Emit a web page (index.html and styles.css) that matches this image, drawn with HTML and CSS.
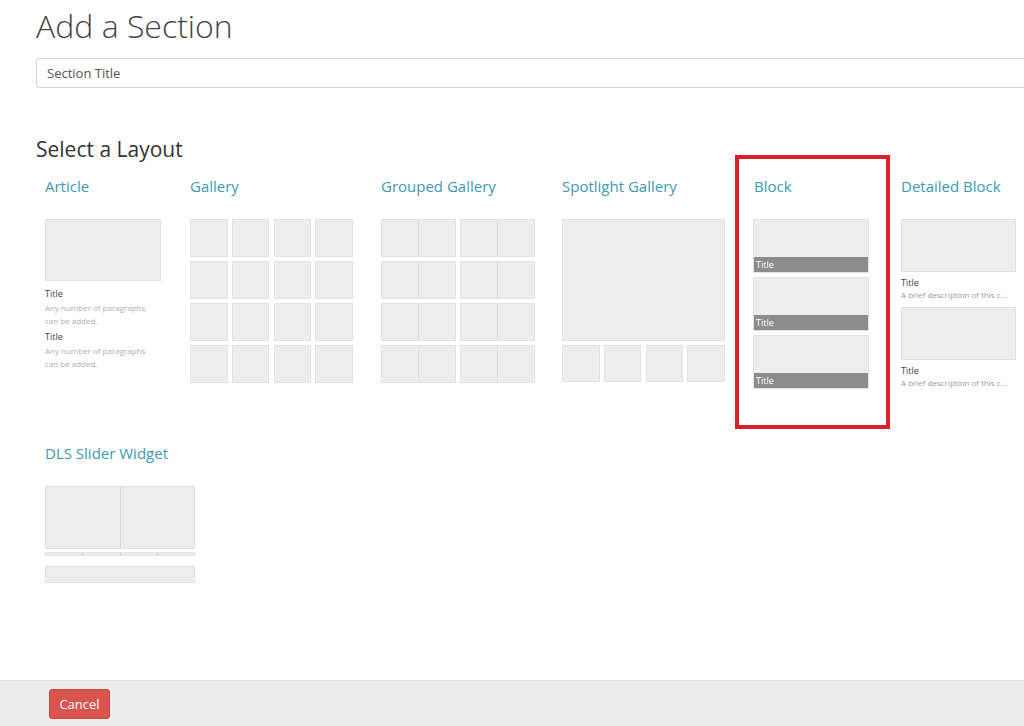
FILE: index.html
```html
<!DOCTYPE html>
<html>
<head>
<meta charset="utf-8">
<link rel="stylesheet" href="styles.css">
</head>
<body>
<div class="page">
  <main class="main">
    <h1 class="page-title">Add a Section</h1>
    <input class="title-input" type="text" placeholder="Section Title">
    <h2 class="select-title">Select a Layout</h2>

    <div class="layouts">
      <div class="option col-article">
        <div class="option-name">Article</div>
        <div class="thumb art-img"></div>
        <div class="art-title">Title</div>
        <div class="art-desc">Any number of paragraphs can be added.</div>
        <div class="art-title art-title2">Title</div>
        <div class="art-desc">Any number of paragraphs can be added.</div>
      </div>

      <div class="option col-gallery">
        <div class="option-name">Gallery</div>
        <div class="gallery">
          <div class="thumb"></div><div class="thumb"></div><div class="thumb"></div><div class="thumb"></div>
          <div class="thumb"></div><div class="thumb"></div><div class="thumb"></div><div class="thumb"></div>
          <div class="thumb"></div><div class="thumb"></div><div class="thumb"></div><div class="thumb"></div>
          <div class="thumb"></div><div class="thumb"></div><div class="thumb"></div><div class="thumb"></div>
        </div>
      </div>

      <div class="option col-grouped">
        <div class="option-name">Grouped Gallery</div>
        <div class="grouped">
          <div class="group"><div class="gcell"></div><div class="gcell"></div></div>
          <div class="group"><div class="gcell"></div><div class="gcell"></div></div>
          <div class="group"><div class="gcell"></div><div class="gcell"></div></div>
          <div class="group"><div class="gcell"></div><div class="gcell"></div></div>
          <div class="group"><div class="gcell"></div><div class="gcell"></div></div>
          <div class="group"><div class="gcell"></div><div class="gcell"></div></div>
          <div class="group"><div class="gcell"></div><div class="gcell"></div></div>
          <div class="group"><div class="gcell"></div><div class="gcell"></div></div>
        </div>
      </div>

      <div class="option col-spotlight">
        <div class="option-name">Spotlight Gallery</div>
        <div class="thumb spot-main"></div>
        <div class="spot-row">
          <div class="thumb"></div><div class="thumb"></div><div class="thumb"></div><div class="thumb"></div>
        </div>
      </div>

      <div class="option col-block highlighted">
        <div class="option-name">Block</div>
        <div class="blocks">
          <div class="block-card"><div class="block-img"></div><div class="block-bar">Title</div></div>
          <div class="block-card"><div class="block-img"></div><div class="block-bar">Title</div></div>
          <div class="block-card"><div class="block-img"></div><div class="block-bar">Title</div></div>
        </div>
      </div>

      <div class="option col-detailed">
        <div class="option-name">Detailed Block</div>
        <div class="thumb det-img"></div>
        <div class="det-title">Title</div>
        <div class="det-desc">A brief description of this c...</div>
        <div class="thumb det-img det-img2"></div>
        <div class="det-title">Title</div>
        <div class="det-desc">A brief description of this c...</div>
      </div>
    </div>

    <div class="layouts row2">
      <div class="option col-slider">
        <div class="option-name">DLS Slider Widget</div>
        <div class="slider-main">
          <div class="slider-half"></div>
          <div class="slider-half"></div>
        </div>
        <div class="slider-track">
          <div class="seg"></div><div class="seg"></div><div class="seg"></div><div class="seg"></div>
        </div>
        <div class="thumb slider-bar"></div>
      </div>
    </div>
  </main>

  <footer class="footer">
    <button class="btn-cancel">Cancel</button>
  </footer>
</div>
</body>
</html>
```

FILE: styles.css
```css
*, *::before, *::after { box-sizing: border-box; }

html, body {
  margin: 0;
  padding: 0;
  height: 100%;
  overflow: hidden;
  background: #fff;
  font-family: "Open Sans", "Liberation Sans", sans-serif;
  color: #333;
}

.page {
  display: flex;
  flex-direction: column;
  height: 100vh;
}

.main {
  flex: 1;
  padding-left: 36px;
}

.page-title {
  margin: 0;
  padding-top: 4px;
  font-size: 32px;
  line-height: 44px;
  font-weight: 300;
  color: #444;
}

.title-input {
  display: block;
  margin-top: 10px;
  width: 1000px;
  height: 30px;
  border: 1px solid #d4d4d4;
  border-radius: 3px;
  padding: 0 10px;
  font-family: inherit;
  font-size: 13px;
  color: #555;
  background: #fff;
  outline: none;
}
.title-input::placeholder { color: #555; opacity: 1; }

.select-title {
  margin: 47px 0 0 0;
  font-size: 21px;
  line-height: 28px;
  font-weight: 400;
  color: #333;
}

.layouts {
  display: flex;
  margin-top: 12px;
  padding-left: 9px;
}

.option { flex-shrink: 0; position: relative; }

.option-name {
  font-size: 15px;
  line-height: 22px;
  color: #3e9ab2;
  margin-bottom: 22px;
  white-space: nowrap;
}

.col-article { width: 145px; }
.col-gallery { width: 191px; }
.col-grouped { width: 181px; }
.col-spotlight { width: 192px; }
.col-block { width: 147px; }
.col-detailed { width: 123px; }

.thumb {
  background: #ededed;
  border: 1px solid #e2e2e2;
}

/* Article */
.art-img { width: 116px; height: 62px; }
.art-title {
  margin-top: 7px;
  font-size: 9px;
  line-height: 12px;
  color: #444;
}
.art-title2 { margin-top: 4px; }
.art-desc {
  width: 112px;
  margin-top: 1px;
  font-size: 8px;
  line-height: 13px;
  color: #b0b0b0;
}

/* Gallery */
.gallery {
  display: grid;
  grid-template-columns: repeat(4, 37.5px);
  grid-auto-rows: 38px;
  gap: 4px 4.3px;
}

/* Grouped gallery */
.grouped {
  display: grid;
  grid-template-columns: repeat(2, 75px);
  grid-auto-rows: 38px;
  gap: 4px 3.5px;
}
.group {
  display: flex;
  border: 1px solid #e2e2e2;
  background: #ededed;
}
.gcell { flex: 1; }
.gcell + .gcell { border-left: 1px solid #dcdcdc; }

/* Spotlight */
.spot-main { width: 163px; height: 122px; }
.spot-row {
  display: grid;
  grid-template-columns: repeat(4, 1fr);
  gap: 4.3px;
  width: 163px;
  margin-top: 4px;
}
.spot-row .thumb { height: 37px; }

/* Block */
.highlighted::before {
  content: "";
  position: absolute;
  left: -19px;
  top: -20px;
  width: 155px;
  height: 274px;
  border: 4px solid #d9202b;
  pointer-events: none;
}
.blocks {
  display: flex;
  flex-direction: column;
  gap: 4px;
  margin-left: -1px;
}
.block-card { width: 116px; border: 1px solid #e2e2e2; }
.block-img { height: 37px; background: #ededed; }
.block-bar {
  height: 15px;
  background: #8c8c8c;
  color: #fff;
  font-size: 9px;
  line-height: 15px;
  padding-left: 2px;
}

/* Detailed */
.det-img { width: 115px; height: 53px; }
.det-img2 { margin-top: 6px; }
.det-title {
  margin-top: 5px;
  font-size: 9px;
  line-height: 12px;
  color: #444;
}
.det-desc {
  width: 118px;
  font-size: 8px;
  line-height: 12px;
  color: #999;
  white-space: nowrap;
}

/* Row 2 */
.row2 { margin-top: 53px; }
.col-slider { width: 200px; }
.slider-main {
  display: flex;
  width: 150px;
  height: 63px;
  border: 1px solid #e2e2e2;
  background: #ededed;
}
.slider-half { flex: 1; }
.slider-half + .slider-half { border-left: 1px solid #d8d8d8; }
.slider-track {
  display: flex;
  width: 150px;
  height: 4px;
  margin-top: 3px;
  background: #ededed;
  border: 1px solid #e4e4e4;
}
.seg { flex: 1; }
.seg + .seg { border-left: 1px solid #c8c8c8; }
.slider-bar { width: 150px; height: 17px; margin-top: 10px; }

/* Footer */
.footer {
  height: 46px;
  flex-shrink: 0;
  background: #ececec;
  border-top: 1px solid #dcdcdc;
  padding: 8px 0 0 49px;
}
.btn-cancel {
  width: 61px;
  height: 30px;
  background: #d9534f;
  border: 1px solid #d0463f;
  border-radius: 3px;
  color: #fff;
  font-family: inherit;
  font-size: 13px;
  padding: 0;
  cursor: pointer;
}
```
